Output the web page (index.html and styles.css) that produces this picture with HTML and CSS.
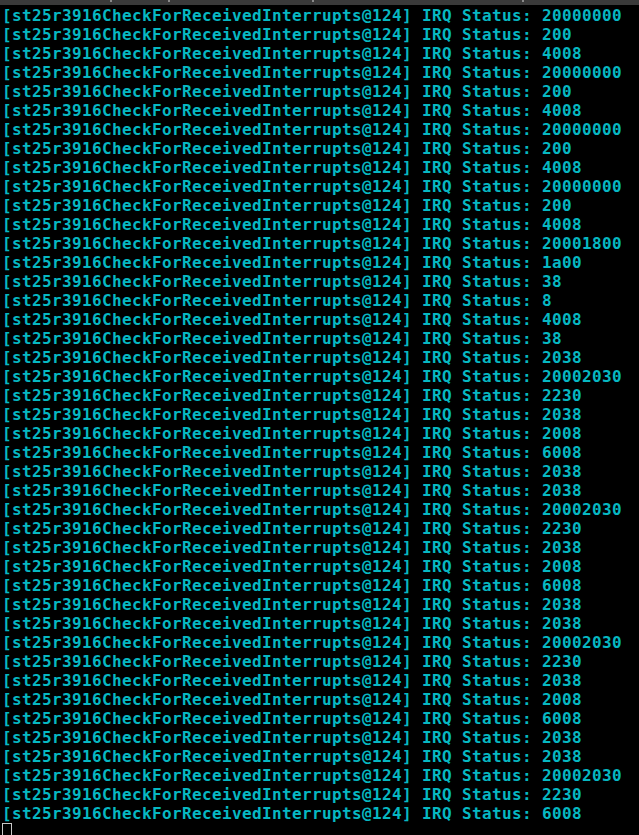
FILE: index.html
```html
<!DOCTYPE html>
<html>
<head>
<meta charset="utf-8">
<link rel="stylesheet" href="styles.css">
</head>
<body>
<div class="term">
  <div class="topbar"><span class="mark m1"></span><span class="mark m2"></span><span class="mark m3"></span><span class="mark m4"></span></div>
  <div class="out">
<div class="ln">[st25r3916CheckForReceivedInterrupts@124] IRQ Status: 20000000</div>
<div class="ln">[st25r3916CheckForReceivedInterrupts@124] IRQ Status: 200</div>
<div class="ln">[st25r3916CheckForReceivedInterrupts@124] IRQ Status: 4008</div>
<div class="ln">[st25r3916CheckForReceivedInterrupts@124] IRQ Status: 20000000</div>
<div class="ln">[st25r3916CheckForReceivedInterrupts@124] IRQ Status: 200</div>
<div class="ln">[st25r3916CheckForReceivedInterrupts@124] IRQ Status: 4008</div>
<div class="ln">[st25r3916CheckForReceivedInterrupts@124] IRQ Status: 20000000</div>
<div class="ln">[st25r3916CheckForReceivedInterrupts@124] IRQ Status: 200</div>
<div class="ln">[st25r3916CheckForReceivedInterrupts@124] IRQ Status: 4008</div>
<div class="ln">[st25r3916CheckForReceivedInterrupts@124] IRQ Status: 20000000</div>
<div class="ln">[st25r3916CheckForReceivedInterrupts@124] IRQ Status: 200</div>
<div class="ln">[st25r3916CheckForReceivedInterrupts@124] IRQ Status: 4008</div>
<div class="ln">[st25r3916CheckForReceivedInterrupts@124] IRQ Status: 20001800</div>
<div class="ln">[st25r3916CheckForReceivedInterrupts@124] IRQ Status: 1a00</div>
<div class="ln">[st25r3916CheckForReceivedInterrupts@124] IRQ Status: 38</div>
<div class="ln">[st25r3916CheckForReceivedInterrupts@124] IRQ Status: 8</div>
<div class="ln">[st25r3916CheckForReceivedInterrupts@124] IRQ Status: 4008</div>
<div class="ln">[st25r3916CheckForReceivedInterrupts@124] IRQ Status: 38</div>
<div class="ln">[st25r3916CheckForReceivedInterrupts@124] IRQ Status: 2038</div>
<div class="ln">[st25r3916CheckForReceivedInterrupts@124] IRQ Status: 20002030</div>
<div class="ln">[st25r3916CheckForReceivedInterrupts@124] IRQ Status: 2230</div>
<div class="ln">[st25r3916CheckForReceivedInterrupts@124] IRQ Status: 2038</div>
<div class="ln">[st25r3916CheckForReceivedInterrupts@124] IRQ Status: 2008</div>
<div class="ln">[st25r3916CheckForReceivedInterrupts@124] IRQ Status: 6008</div>
<div class="ln">[st25r3916CheckForReceivedInterrupts@124] IRQ Status: 2038</div>
<div class="ln">[st25r3916CheckForReceivedInterrupts@124] IRQ Status: 2038</div>
<div class="ln">[st25r3916CheckForReceivedInterrupts@124] IRQ Status: 20002030</div>
<div class="ln">[st25r3916CheckForReceivedInterrupts@124] IRQ Status: 2230</div>
<div class="ln">[st25r3916CheckForReceivedInterrupts@124] IRQ Status: 2038</div>
<div class="ln">[st25r3916CheckForReceivedInterrupts@124] IRQ Status: 2008</div>
<div class="ln">[st25r3916CheckForReceivedInterrupts@124] IRQ Status: 6008</div>
<div class="ln">[st25r3916CheckForReceivedInterrupts@124] IRQ Status: 2038</div>
<div class="ln">[st25r3916CheckForReceivedInterrupts@124] IRQ Status: 2038</div>
<div class="ln">[st25r3916CheckForReceivedInterrupts@124] IRQ Status: 20002030</div>
<div class="ln">[st25r3916CheckForReceivedInterrupts@124] IRQ Status: 2230</div>
<div class="ln">[st25r3916CheckForReceivedInterrupts@124] IRQ Status: 2038</div>
<div class="ln">[st25r3916CheckForReceivedInterrupts@124] IRQ Status: 2008</div>
<div class="ln">[st25r3916CheckForReceivedInterrupts@124] IRQ Status: 6008</div>
<div class="ln">[st25r3916CheckForReceivedInterrupts@124] IRQ Status: 2038</div>
<div class="ln">[st25r3916CheckForReceivedInterrupts@124] IRQ Status: 2038</div>
<div class="ln">[st25r3916CheckForReceivedInterrupts@124] IRQ Status: 20002030</div>
<div class="ln">[st25r3916CheckForReceivedInterrupts@124] IRQ Status: 2230</div>
<div class="ln">[st25r3916CheckForReceivedInterrupts@124] IRQ Status: 6008</div>
<div class="ln"><span class="cursor"></span></div>
  </div>
</div>
</body>
</html>
```
FILE: styles.css
```css
html, body {
  margin: 0;
  padding: 0;
  background: #000;
  overflow: hidden;
}
.term {
  width: 639px;
  height: 835px;
  background: #000;
  overflow: hidden;
}
.topbar {
  height: 5px;
  background: #3a3a3a;
  position: relative;
}
.mark {
  position: absolute;
  top: 0;
  width: 2px;
  height: 2px;
  background: #8a8a8a;
}
.m1 { left: 110px; }
.m2 { left: 168px; }
.m3 { left: 312px; }
.m4 { left: 522px; }
.out {
  padding-left: 2px;
  padding-top: 1px;
  font-family: "DejaVu Sans Mono", monospace;
  font-weight: bold;
  font-size: 16px;
  letter-spacing: 0.367px;
  line-height: 19px;
  color: #06b8c2;
}
.ln {
  height: 19px;
  white-space: pre;
}
.cursor {
  display: inline-block;
  width: 10px;
  height: 19px;
  box-sizing: border-box;
  border: 1px solid #c8c8c8;
  vertical-align: top;
}
```
